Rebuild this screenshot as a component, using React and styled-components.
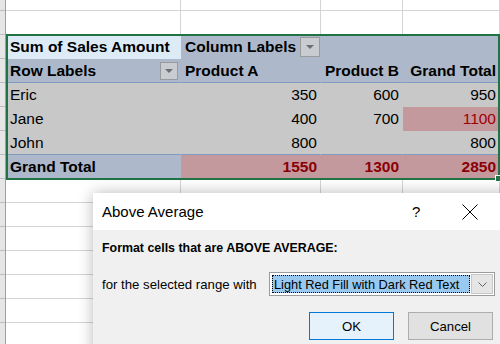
import React from "react";
import styled, { createGlobalStyle } from "styled-components";

const GlobalStyle = createGlobalStyle`
  html, body {
    margin: 0;
    padding: 0;
    background: #fff;
    overflow: hidden;
  }
`;

const Page = styled.div`
  position: relative;
  width: 500px;
  height: 344px;
  overflow: hidden;
  background: #fff;
  font-family: "Liberation Sans", Arial, sans-serif;
`;

const Sheet = styled.div`
  display: flex;
`;

const RowHeaders = styled.div`
  display: flex;
  flex-direction: column;
  width: 6px;
  flex: none;
  background: #e6e6e6;
  border-right: 1px solid #9e9e9e;
  box-sizing: border-box;
`;

const RowHead = styled.div`
  height: ${(p) => p.$h}px;
  box-sizing: border-box;
  border-bottom: 1px solid #bdbdbd;
`;

const Body = styled.div`
  display: flex;
  flex-direction: column;
  flex: 1;
`;

const Row = styled.div`
  display: grid;
  grid-template-columns: 175px 140px 82px 97px;
  height: ${(p) => p.$h || 24}px;
`;

const Cell = styled.div`
  box-sizing: border-box;
  display: flex;
  align-items: center;
  justify-content: ${(p) => (p.$right ? "flex-end" : "flex-start")};
  gap: 4px;
  padding: 1px ${(p) => (p.$right ? "3px" : "2px")} 0 ${(p) => (p.$right ? "2px" : "4px")};
  font-size: 15.5px;
  font-weight: ${(p) => (p.$bold ? 700 : 400)};
  color: ${(p) => p.$color || "#000"};
  background: ${(p) => p.$bg || "transparent"};
  border-right: 1px solid ${(p) => (p.$bg ? p.$bg : "#d4d4d4")};
  border-bottom: 1px solid ${(p) => p.$line || (p.$bg ? p.$bg : "#d4d4d4")};
  white-space: nowrap;
  overflow: hidden;
  ${(p) => p.$spread && "justify-content: space-between;"}
`;

const Pivot = styled.div`
  position: relative;
  &::after {
    content: "";
    position: absolute;
    left: 0;
    top: -1px;
    right: 0;
    bottom: -1px;
    border: 2px solid #217346;
    pointer-events: none;
  }
`;

const Handle = styled.span`
  position: absolute;
  right: -2px;
  bottom: -3px;
  width: 5px;
  height: 5px;
  background: #217346;
  border: 1px solid #fff;
  z-index: 2;
`;

const FilterButton = styled.span`
  flex: none;
  width: ${(p) => p.$size}px;
  height: ${(p) => p.$size}px;
  box-sizing: border-box;
  border: 1px solid #9a9a9a;
  background: #c9ccd1;
  display: flex;
  align-items: center;
  justify-content: center;
  &::before {
    content: "";
    border-left: 4px solid transparent;
    border-right: 4px solid transparent;
    border-top: 4px solid #6e6e6e;
  }
`;

const Dialog = styled.div`
  position: absolute;
  left: 93px;
  top: 193px;
  width: 440px;
  height: 170px;
  background: #f0f0f0;
  box-shadow: 0 0 14px rgba(0, 0, 0, 0.28);
  font-family: "Liberation Sans", Arial, sans-serif;
  color: #000;
  display: flex;
  flex-direction: column;
`;

const TitleBar = styled.div`
  height: 37px;
  background: #fff;
  display: flex;
  align-items: center;
  padding-left: 9px;
  flex: none;
`;

const Title = styled.span`
  font-size: 15px;
  flex: 1;
`;

const Help = styled.span`
  font-size: 15px;
  width: 46px;
  margin-right: 4px;
`;

const Close = styled.span`
  width: 16px;
  height: 16px;
  margin-right: 55px;
  display: flex;
`;

const Content = styled.div`
  padding: 11px 0 0 9px;
  display: flex;
  flex-direction: column;
`;

const Heading = styled.div`
  font-size: 12.4px;
  font-weight: 700;
  height: 14px;
  line-height: 14px;
`;

const RangeRow = styled.div`
  display: flex;
  align-items: center;
  margin-top: 17px;
  height: 24px;
`;

const RangeLabel = styled.span`
  font-size: 13.2px;
  width: 167px;
`;

const Combo = styled.div`
  width: 226px;
  height: 24px;
  box-sizing: border-box;
  border: 1px solid #9c9c9c;
  background: #fff;
  display: flex;
  align-items: stretch;
  padding: 2px 1px 2px 2px;
`;

const ComboValue = styled.div`
  flex: 1;
  background: #99c9ef;
  outline: 1px dotted #000;
  outline-offset: -1px;
  font-size: 12.8px;
  display: flex;
  align-items: center;
  padding-left: 2px;
  white-space: nowrap;
`;

const ComboArrow = styled.div`
  width: 22px;
  margin: -1px 0 -1px 1px;
  box-sizing: border-box;
  border: 1px solid #c8c8c8;
  background: #e5e5e5;
  display: flex;
  align-items: center;
  justify-content: center;
`;

const Buttons = styled.div`
  display: flex;
  gap: 14px;
  margin: 16px 0 0 207px;
`;

const Button = styled.button`
  width: 85px;
  height: 28px;
  box-sizing: border-box;
  font-family: "Liberation Sans", Arial, sans-serif;
  font-size: 13.2px;
  color: #000;
  padding: 0;
  background: ${(p) => (p.$primary ? "#e5f1fb" : "#e1e1e1")};
  border: 1px solid ${(p) => (p.$primary ? "#0078d7" : "#adadad")};
`;

const HEAD = "#adb9ca";
const DATA = "#c8c8c8";
const PINK = "#c4999d";
const LINE = "#7f9bbf";
const RED = "#9c0006";

const heights = [11, 24, 24, 24, 24, 24, 24, 24, 24, 24, 24, 24, 24, 24, 24];

const EmptyRow = ({ h }) => (
  <Row $h={h}>
    <Cell />
    <Cell />
    <Cell />
    <Cell />
  </Row>
);

const data = [
  { name: "Eric", a: "350", b: "600", total: "950" },
  { name: "Jane", a: "400", b: "700", total: "1100", hot: true },
  { name: "John", a: "800", b: "", total: "800" }
];

export default function App() {
  return (
    <Page>
      <GlobalStyle />
      <Sheet>
        <RowHeaders>
          {heights.map((h, i) => (
            <RowHead key={i} $h={h} />
          ))}
        </RowHeaders>
        <Body>
          <EmptyRow h={11} />
          <EmptyRow />
          <Pivot>
            <Row>
              <Cell $bold $bg="#ddebf7">Sum of Sales Amount</Cell>
              <Cell $bold $bg={HEAD} style={{ gridColumn: "2 / 5" }}>
                Column Labels
                <FilterButton $size={20} />
              </Cell>
            </Row>
            <Row>
              <Cell $bold $bg={HEAD} $line={LINE} $spread>
                Row Labels
                <FilterButton $size={18} />
              </Cell>
              <Cell $bold $bg={HEAD} $line={LINE}>Product A</Cell>
              <Cell $bold $bg={HEAD} $line={LINE} $right>Product B</Cell>
              <Cell $bold $bg={HEAD} $line={LINE} $right>Grand Total</Cell>
            </Row>
            {data.map((r, i) => {
              const last = i === data.length - 1 ? LINE : undefined;
              return (
                <Row key={r.name}>
                  <Cell $bg={DATA} $line={last}>{r.name}</Cell>
                  <Cell $bg={DATA} $right $line={last}>{r.a}</Cell>
                  <Cell $bg={DATA} $right $line={last}>{r.b}</Cell>
                  <Cell
                    $bg={r.hot ? PINK : DATA}
                    $color={r.hot ? RED : undefined}
                    $right
                    $line={last}
                  >
                    {r.total}
                  </Cell>
                </Row>
              );
            })}
            <Row>
              <Cell $bold $bg={HEAD}>Grand Total</Cell>
              <Cell $bold $bg={PINK} $color="#8a0005" $right>1550</Cell>
              <Cell $bold $bg={PINK} $color="#8a0005" $right>1300</Cell>
              <Cell $bold $bg={PINK} $color="#8a0005" $right>2850</Cell>
            </Row>
            <Handle />
          </Pivot>
          {heights.slice(9).map((h, i) => (
            <EmptyRow key={i} h={h} />
          ))}
        </Body>
      </Sheet>

      <Dialog>
        <TitleBar>
          <Title>Above Average</Title>
          <Help>?</Help>
          <Close>
            <svg width="16" height="16" viewBox="0 0 16 16">
              <path d="M0.5 0.5 L15.5 15.5 M15.5 0.5 L0.5 15.5" stroke="#000" strokeWidth="1" fill="none" />
            </svg>
          </Close>
        </TitleBar>
        <Content>
          <Heading>Format cells that are ABOVE AVERAGE:</Heading>
          <RangeRow>
            <RangeLabel>for the selected range with</RangeLabel>
            <Combo>
              <ComboValue>Light Red Fill with Dark Red Text</ComboValue>
              <ComboArrow>
                <svg width="9" height="5" viewBox="0 0 9 5">
                  <path d="M0.5 0.5 L4.5 4.5 L8.5 0.5" stroke="#606060" strokeWidth="1" fill="none" />
                </svg>
              </ComboArrow>
            </Combo>
          </RangeRow>
          <Buttons>
            <Button $primary>OK</Button>
            <Button>Cancel</Button>
          </Buttons>
        </Content>
      </Dialog>
    </Page>
  );
}
